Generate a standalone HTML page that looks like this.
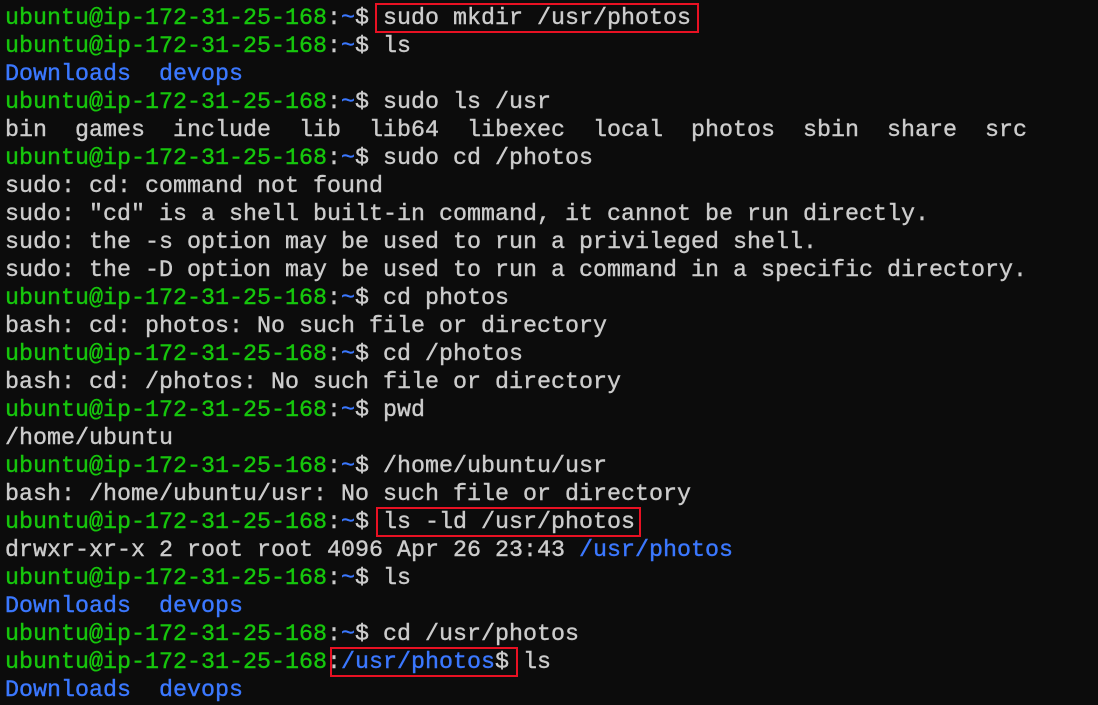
<!DOCTYPE html><html><head><style>
body{margin:0;background:#0c0c0c;width:1098px;height:680px;overflow:hidden;position:relative}
pre{margin:0;position:absolute;left:5px;top:5px;font-family:"Liberation Mono",monospace;font-size:23.33px;line-height:28px;color:#cccccc;font-weight:normal;-webkit-text-stroke:0.4px}
.g{color:#16c60c}.b{color:#3b78ff}
.box{position:absolute;border:2px solid #e81123;box-sizing:border-box}
</style></head><body>
<pre><span class="g">ubuntu@ip-172-31-25-168</span>:<span class="b">~</span>$ sudo mkdir /usr/photos
<span class="g">ubuntu@ip-172-31-25-168</span>:<span class="b">~</span>$ ls
<span class="b">Downloads</span>  <span class="b">devops</span>
<span class="g">ubuntu@ip-172-31-25-168</span>:<span class="b">~</span>$ sudo ls /usr
bin  games  include  lib  lib64  libexec  local  photos  sbin  share  src
<span class="g">ubuntu@ip-172-31-25-168</span>:<span class="b">~</span>$ sudo cd /photos
sudo: cd: command not found
sudo: "cd" is a shell built-in command, it cannot be run directly.
sudo: the -s option may be used to run a privileged shell.
sudo: the -D option may be used to run a command in a specific directory.
<span class="g">ubuntu@ip-172-31-25-168</span>:<span class="b">~</span>$ cd photos
bash: cd: photos: No such file or directory
<span class="g">ubuntu@ip-172-31-25-168</span>:<span class="b">~</span>$ cd /photos
bash: cd: /photos: No such file or directory
<span class="g">ubuntu@ip-172-31-25-168</span>:<span class="b">~</span>$ pwd
/home/ubuntu
<span class="g">ubuntu@ip-172-31-25-168</span>:<span class="b">~</span>$ /home/ubuntu/usr
bash: /home/ubuntu/usr: No such file or directory
<span class="g">ubuntu@ip-172-31-25-168</span>:<span class="b">~</span>$ ls -ld /usr/photos
drwxr-xr-x 2 root root 4096 Apr 26 23:43 <span class="b">/usr/photos</span>
<span class="g">ubuntu@ip-172-31-25-168</span>:<span class="b">~</span>$ ls
<span class="b">Downloads</span>  <span class="b">devops</span>
<span class="g">ubuntu@ip-172-31-25-168</span>:<span class="b">~</span>$ cd /usr/photos
<span class="g">ubuntu@ip-172-31-25-168</span>:<span class="b">/usr/photos</span>$ ls
<span class="b">Downloads</span>  <span class="b">devops</span></pre>
<div class="box" style="left:375px;top:3px;width:324px;height:30px"></div>
<div class="box" style="left:376px;top:507px;width:265px;height:30px"></div>
<div class="box" style="left:330px;top:647px;width:188px;height:30px"></div>
</body></html>
